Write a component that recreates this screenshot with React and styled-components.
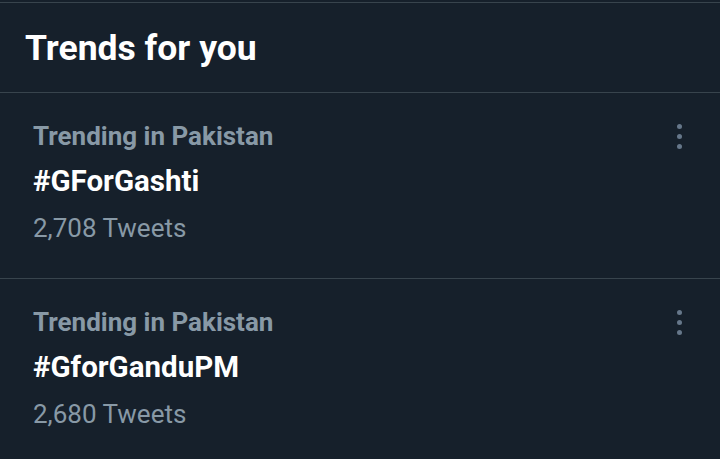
import React from 'react';
import styled, { createGlobalStyle } from 'styled-components';

const GlobalStyle = createGlobalStyle`
    html, body {
        margin:0;
        padding:0;
        background:#16202b;
    }
    body {
        font-family:Roboto, "Noto Sans", Arial, sans-serif;
    }
`

const Panel = styled.div`
    width:720px;
    height:459px;
    overflow:hidden;
    background:#16202b;
    border-top:1px solid #38444d;
    margin-top:2px;
    box-sizing:border-box;
`

const Header = styled.div`
    height:89px;
    padding:0 25px;
    display:flex;
    align-items:center;
    border-bottom:1px solid #38444d;
`

const Title = styled.h2`
    margin:0;
    font-size:35.5px;
    font-weight:700;
    color:#fff;
`

const Trend = styled.div`
    display:flex;
    justify-content:space-between;
    height:186px;
    padding:26px 38px 0 33px;
    box-sizing:border-box;
    border-bottom:1px solid #38444d;
`

const Info = styled.div`
    display:flex;
    flex-direction:column;
`

const Context = styled.span`
    font-size:26px;
    font-weight:700;
    color:#8899a6;
    line-height:34px;
`

const Tag = styled.span`
    font-size:29.5px;
    font-weight:700;
    color:#fff;
    line-height:47px;
    margin-top:5px;
`

const Count = styled.span`
    font-size:26px;
    color:#8899a6;
    line-height:47px;
`

const More = styled.div`
    display:flex;
    flex-direction:column;
    gap:5px;
    padding-top:5px;
`

const Dot = styled.span`
    width:5px;
    height:5px;
    border-radius:50%;
    background:#66778a;
`

const trends = [
    { tag:'#GForGashti', count:'2,708' },
    { tag:'#GforGanduPM', count:'2,680' },
]

function App() {
    return (
        <Panel>
            <GlobalStyle/>
            <Header>
                <Title>Trends for you</Title>
            </Header>
            {trends.map(t=>(
                <Trend key={t.tag}>
                    <Info>
                        <Context>Trending in Pakistan</Context>
                        <Tag>{t.tag}</Tag>
                        <Count>{t.count} Tweets</Count>
                    </Info>
                    <More>
                        <Dot/><Dot/><Dot/>
                    </More>
                </Trend>
            ))}
        </Panel>
    )
}

export default App
